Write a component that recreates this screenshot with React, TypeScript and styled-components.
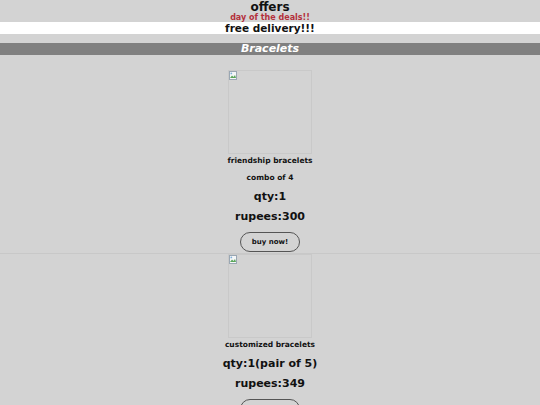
import styled, { createGlobalStyle } from 'styled-components';

const GlobalStyle = createGlobalStyle`
  html, body {
    margin: 0;
    padding: 0;
    background: #d3d3d3;
    font-family: "DejaVu Sans", "Liberation Sans", sans-serif;
  }
`;

type Product = {
  id: number;
  name: string;
  note?: string;
  qty: string;
  price: number;
};

const PRODUCTS: Product[] = [
  { id: 1, name: 'friendship bracelets', note: 'combo of 4', qty: 'qty:1', price: 300 },
  { id: 2, name: 'customized bracelets', qty: 'qty:1(pair of 5)', price: 349 },
];

function BrokenImage() {
  return (
    <ImageBox>
      <svg width="8" height="9" viewBox="0 0 8 9">
        <rect x="0.5" y="0.5" width="7" height="8" fill="#f4f6f8" stroke="#9aa7b3" />
        <path d="M1 7 L3 4.5 L4.5 6 L6 4 L7 7 Z" fill="#5aa65a" />
        <circle cx="2.3" cy="2.4" r="0.9" fill="#7fb0d8" />
      </svg>
    </ImageBox>
  );
}

export default function App() {
  return (
    <Page>
      <GlobalStyle />
      <Offers>offers</Offers>
      <Deals>day of the deals!!</Deals>
      <Delivery>free delivery!!!</Delivery>
      <SectionTitle>Bracelets</SectionTitle>
      {PRODUCTS.map((p) => (
        <Card key={p.id}>
          <BrokenImage />
          <Name>{p.name}</Name>
          {p.note && <Note>{p.note}</Note>}
          <Qty>{p.qty}</Qty>
          <Price>rupees:{p.price}</Price>
          <BuyButton>buy now!</BuyButton>
        </Card>
      ))}
    </Page>
  );
}

const Page = styled.div`
  display: flex;
  flex-direction: column;
  text-align: center;
  color: #111;
`;

const Offers = styled.h3`
  margin: 0;
  padding-top: 1px;
  font-size: 12px;
  line-height: 13px;
  font-weight: bold;
`;

const Deals = styled.h5`
  margin: 0;
  font-size: 8px;
  line-height: 8px;
  font-weight: bold;
  color: #b3303b;
`;

const Delivery = styled.h4`
  margin: 0;
  background: #ffffff;
  font-size: 10.5px;
  line-height: 12px;
  font-weight: bold;
`;

const SectionTitle = styled.h2`
  margin: 9px 0 15px;
  background: #808080;
  color: #ffffff;
  font-size: 11px;
  line-height: 12px;
  font-style: italic;
  font-weight: bold;
`;

const Card = styled.div`
  display: flex;
  flex-direction: column;
  align-items: center;
  padding-bottom: 1px;
  border-bottom: 1px solid #c8c8c8;
`;

const ImageBox = styled.div`
  width: 82px;
  height: 82px;
  border: 1px solid #c9c9c9;
  display: flex;
  align-items: flex-start;
  justify-content: flex-start;
`;

const Name = styled.p`
  margin: 0;
  padding-top: 2px;
  font-size: 7.5px;
  line-height: 10px;
  font-weight: bold;
`;

const Note = styled.p`
  margin: 7px 0 0;
  font-size: 7.5px;
  line-height: 10px;
  font-weight: bold;
`;

const Qty = styled.p`
  margin: 7px 0 0;
  font-size: 11px;
  line-height: 14px;
  font-weight: bold;
`;

const Price = styled(Qty)`
  margin-top: 6px;
`;

const BuyButton = styled.button`
  margin-top: 8px;
  width: 60px;
  height: 20px;
  border: 1px solid #555555;
  border-radius: 10px;
  background: transparent;
  font-family: inherit;
  font-size: 7px;
  font-weight: bold;
  color: #111;
  padding: 0;
`;
